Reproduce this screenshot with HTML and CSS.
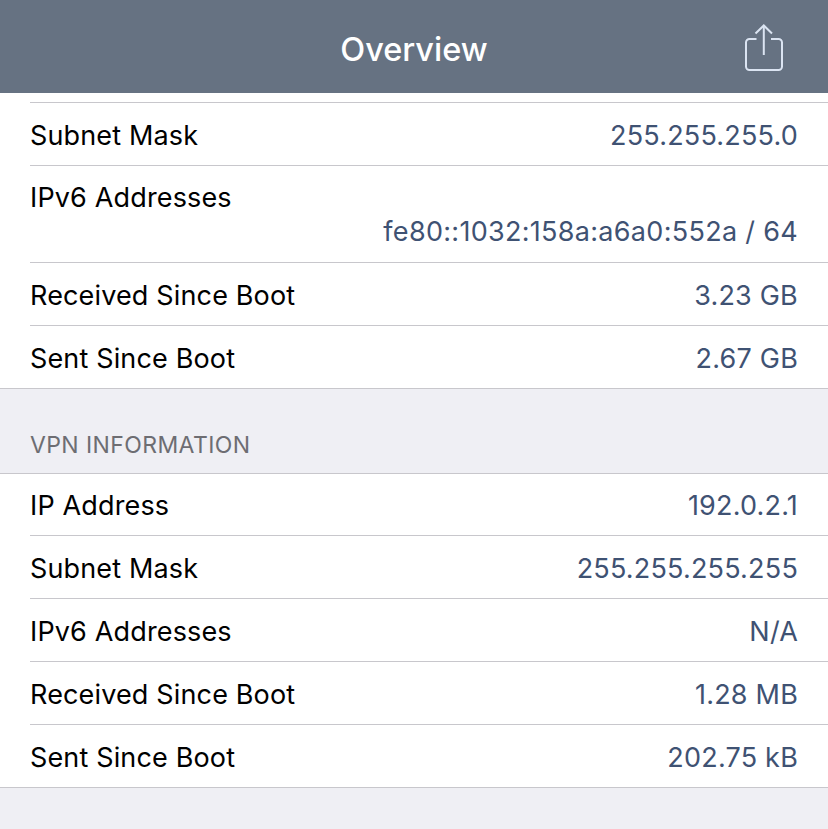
FILE: index.html
```html
<!DOCTYPE html>
<html>
  <head>
    <meta charset="UTF-8" />
    <title>Overview</title>
    <link rel="stylesheet" href="styles.css">
  </head>
  <body>
    <header class="navbar">
      <h1>Overview</h1>
      <button class="share-button" aria-label="Share">
        <svg width="40" height="50" viewBox="0 0 40 50" fill="none" stroke="#dbe4f2" stroke-width="2">
          <path d="M12.500 16H5.500a3.500 3.500 0 0 0-3.500 3.500V43.500A3.500 3.500 0 0 0 5.500 47h29a3.500 3.500 0 0 0 3.500-3.500V19.500A3.500 3.500 0 0 0 34.500 16H27" />
          <path d="M19.800 32V3" />
          <path d="M11.500 10.500L19.800 2.500 28 10.500" />
        </svg>
      </button>
    </header>

    <div class="table-top"></div>
    <section class="group group-first">
      <div class="row"><span class="label">Subnet Mask</span><span class="value">255.255.255.0</span></div>
      <div class="row row-tall">
        <span class="label">IPv6 Addresses</span>
        <span class="value">fe80::1032:158a:a6a0:552a / 64</span>
      </div>
      <div class="row"><span class="label">Received Since Boot</span><span class="value">3.23 GB</span></div>
      <div class="row"><span class="label">Sent Since Boot</span><span class="value">2.67 GB</span></div>
    </section>

    <h2 class="group-title">VPN INFORMATION</h2>
    <section class="group group-vpn">
      <div class="row"><span class="label">IP Address</span><span class="value">192.0.2.1</span></div>
      <div class="row"><span class="label">Subnet Mask</span><span class="value">255.255.255.255</span></div>
      <div class="row"><span class="label">IPv6 Addresses</span><span class="value">N/A</span></div>
      <div class="row"><span class="label">Received Since Boot</span><span class="value">1.28 MB</span></div>
      <div class="row"><span class="label">Sent Since Boot</span><span class="value">202.75 kB</span></div>
    </section>
  </body>
</html>
```

FILE: styles.css
```css
html, body {
  height: 100%;
}
body {
  font-family: Inter, "Liberation Sans", sans-serif;
  margin: 0;
  background: #efeff4;
  overflow: hidden;
}
.navbar {
  height: 93px;
  background: #667282;
  display: flex;
  align-items: center;
  justify-content: center;
  position: relative;
}
.navbar h1 {
  margin: 6px 0 0;
  color: #fff;
  font-size: 32.500px;
  font-weight: 500;
}
.share-button {
  position: absolute;
  right: 44px;
  top: 23px;
  padding: 0;
  border: none;
  background: none;
  line-height: 0;
}
.table-top {
  height: 9px;
  background: #fff;
}
.group {
  background: #fff;
  border-top: 1px solid #c8c7cc;
  border-bottom: 1px solid #c8c7cc;
  padding-left: 30px;
}
.group-first {
  border-top: none;
}
.row {
  min-height: 63px;
  box-sizing: border-box;
  display: flex;
  justify-content: space-between;
  align-items: center;
  padding: 2px 30px 0 0;
  border-bottom: 1px solid #c8c7cc;
  font-size: 27px;
}
.row:last-child {
  min-height: 62px;
  border-bottom: none;
}
.group-first .row:first-child {
  border-top: 1px solid #c8c7cc;
  min-height: 64px;
}
.group-vpn .row:first-child {
  min-height: 62px;
}
.row-tall {
  height: 97px;
  flex-direction: column;
  align-items: stretch;
  justify-content: flex-start;
  padding-top: 15px;
}
.row-tall .value {
  text-align: right;
  margin-top: 1px;
  letter-spacing: 0.3px;
}
.label {
  color: #000;
  letter-spacing: 0.15px;
}
.value {
  color: #3f5273;
  letter-spacing: 0.2px;
}
.group-title {
  margin: 0;
  height: 84px;
  box-sizing: border-box;
  padding: 42px 0 0 30px;
  color: #6d6d72;
  font-size: 23px;
  font-weight: 400;
  letter-spacing: 0.4px;
}
```
